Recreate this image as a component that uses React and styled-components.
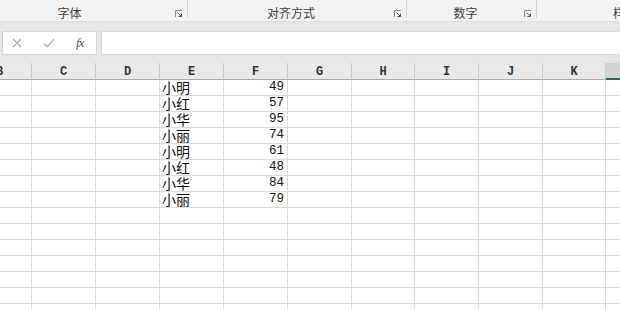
import React from "react";
import styled, { createGlobalStyle } from "styled-components";

const Global = createGlobalStyle`
  html, body {
    margin: 0;
    padding: 0;
    background: #fff;
    overflow: hidden;
  }
  #root { width: 620px; height: 309px; overflow: hidden; }
`;

const COLS = [
  { id: "B", w: 64 },
  { id: "C", w: 64 },
  { id: "D", w: 64 },
  { id: "E", w: 64 },
  { id: "F", w: 64 },
  { id: "G", w: 64 },
  { id: "H", w: 63 },
  { id: "I", w: 64 },
  { id: "J", w: 64 },
  { id: "K", w: 63 },
  { id: "L", w: 64, selected: true },
];
const TEMPLATE = COLS.map((c) => `${c.w}px`).join(" ");

const LI = "\u5c0f\u4e3d";

const DATA = [
  ["小明", 49],
  ["小红", 57],
  ["小华", 95],
  [LI, 74],
  ["小明", 61],
  ["小红", 48],
  ["小华", 84],
  [LI, 79],
];

const Page = styled.div`
  width: 620px;
  height: 309px;
  overflow: hidden;
  display: flex;
  flex-direction: column;
  font-family: "Noto Sans CJK SC", sans-serif;
`;

const Ribbon = styled.div`
  height: 21px;
  flex: none;
  background: #f3f3f3;
  display: flex;
  align-items: stretch;
  overflow: hidden;
`;

const Group = styled.div`
  flex: none;
  width: ${(p) => p.$w}px;
  margin-left: ${(p) => p.$shift || 0}px;
  display: flex;
  align-items: stretch;
`;

const GroupLabel = styled.div`
  flex: 1;
  text-align: center;
  font-size: 12px;
  line-height: 12px;
  padding-top: 7px;
  color: #3c3c3c;
  white-space: nowrap;
`;

const Launcher = styled.div`
  flex: none;
  width: 10px;
  display: flex;
  align-items: flex-start;
  padding-top: 10px;
  margin-right: 2px;
`;

const Divider = styled.div`
  flex: none;
  width: 1px;
  height: 18px;
  background: #d4d4d4;
`;

const FormulaBar = styled.div`
  flex: none;
  background: #e6e6e6;
  border-top: 1px solid #dcdcdc;
  padding: 9px 0 8px 2px;
  display: flex;
  gap: 4px;
`;

const NameBox = styled.div`
  flex: none;
  width: 95px;
  height: 24px;
  box-sizing: border-box;
  background: #fff;
  border: 1px solid #d6d6d6;
  display: flex;
  align-items: center;
  gap: 21px;
  padding: 0 0 0 9px;
`;

const FxLabel = styled.span`
  font-family: "Liberation Serif", serif;
  font-style: italic;
  font-size: 13px;
  color: #555;
  letter-spacing: -1px;
`;

const Input = styled.div`
  flex: 1;
  height: 24px;
  box-sizing: border-box;
  background: #fff;
  border: 1px solid #d6d6d6;
  border-right: none;
`;

const Sheet = styled.div`
  flex: 1;
  margin-left: -32px;
  display: grid;
  grid-template-columns: ${TEMPLATE};
  grid-auto-rows: 16px;
  grid-template-rows: 17px;
  overflow: hidden;
`;

const HeadCell = styled.div`
  box-sizing: border-box;
  background: ${(p) => (p.$selected ? "#d3d3d3" : "#e9e9e9")};
  border-right: 1px solid #cacaca;
  border-bottom: ${(p) => (p.$selected ? "2px solid #217346" : "1px solid #ababab")};
  font-family: "Liberation Mono", monospace;
  font-size: 12px;
  font-weight: bold;
  color: #333;
  display: flex;
  align-items: center;
  justify-content: center;
  padding-top: 1px;
`;

const Cell = styled.div`
  box-sizing: border-box;
  border-right: 1px solid #dadada;
  border-bottom: 1px solid #dadada;
  display: flex;
  align-items: flex-end;
  justify-content: ${(p) => (p.$num ? "flex-end" : "flex-start")};
  padding: ${(p) => (p.$num ? "0 3px 0 0" : "0 0 0 2px")};
  font-family: ${(p) =>
    p.$num ? `"Liberation Mono", monospace` : `"Noto Sans CJK SC", sans-serif`};
  font-size: ${(p) => (p.$num ? "12.5px" : "14px")};
  line-height: 15px;
  color: #111;
  white-space: nowrap;
  overflow: hidden;
`;

const LauncherIcon = () => (
  <svg width="8" height="8" viewBox="0 0 8 8">
    <path d="M0.5 7V0.5H7" fill="none" stroke="#8a8a8a" strokeWidth="1" />
    <path d="M2.5 2.5L6.5 6.5M6.5 3.5V6.5H3.5" fill="none" stroke="#555" strokeWidth="1" />
  </svg>
);

const CrossIcon = () => (
  <svg width="10" height="10" viewBox="0 0 10 10">
    <path d="M1 1L9 9M9 1L1 9" stroke="#a8a8a8" strokeWidth="1.1" />
  </svg>
);

const CheckIcon = () => (
  <svg width="12" height="10" viewBox="0 0 12 10">
    <path d="M1 5.5L4.2 8.6L11 1.2" fill="none" stroke="#a8a8a8" strokeWidth="1.2" />
  </svg>
);

const groups = [
  { label: "字体", w: 224, shift: -36 },
  { label: "对齐方式", w: 219 },
  { label: "数字", w: 130 },
  { label: "样式", w: 176, noLauncher: true },
];

export default function App() {
  const rows = [];
  for (let r = 0; r < 15; r++) {
    COLS.forEach((c) => {
      const d = DATA[r];
      let content = null;
      let num = false;
      if (d && c.id === "E") content = d[0];
      if (d && c.id === "F") {
        content = d[1];
        num = true;
      }
      rows.push(
        <Cell key={`${r}-${c.id}`} $num={num}>
          {content}
        </Cell>
      );
    });
  }

  return (
    <Page lang="zh-CN">
      <Global />
      <Ribbon>
        {groups.map((g) => (
          <Group key={g.label} $w={g.w} $shift={g.shift}>
            <GroupLabel>{g.label}</GroupLabel>
            {!g.noLauncher && (
              <>
                <Launcher>
                  <LauncherIcon />
                </Launcher>
                <Divider />
              </>
            )}
          </Group>
        ))}
      </Ribbon>
      <FormulaBar>
        <NameBox>
          <CrossIcon />
          <CheckIcon />
          <FxLabel>fx</FxLabel>
        </NameBox>
        <Input />
      </FormulaBar>
      <Sheet>
        {COLS.map((c) => (
          <HeadCell key={c.id} $selected={c.selected}>
            {c.selected ? "" : c.id}
          </HeadCell>
        ))}
        {rows}
      </Sheet>
    </Page>
  );
}
